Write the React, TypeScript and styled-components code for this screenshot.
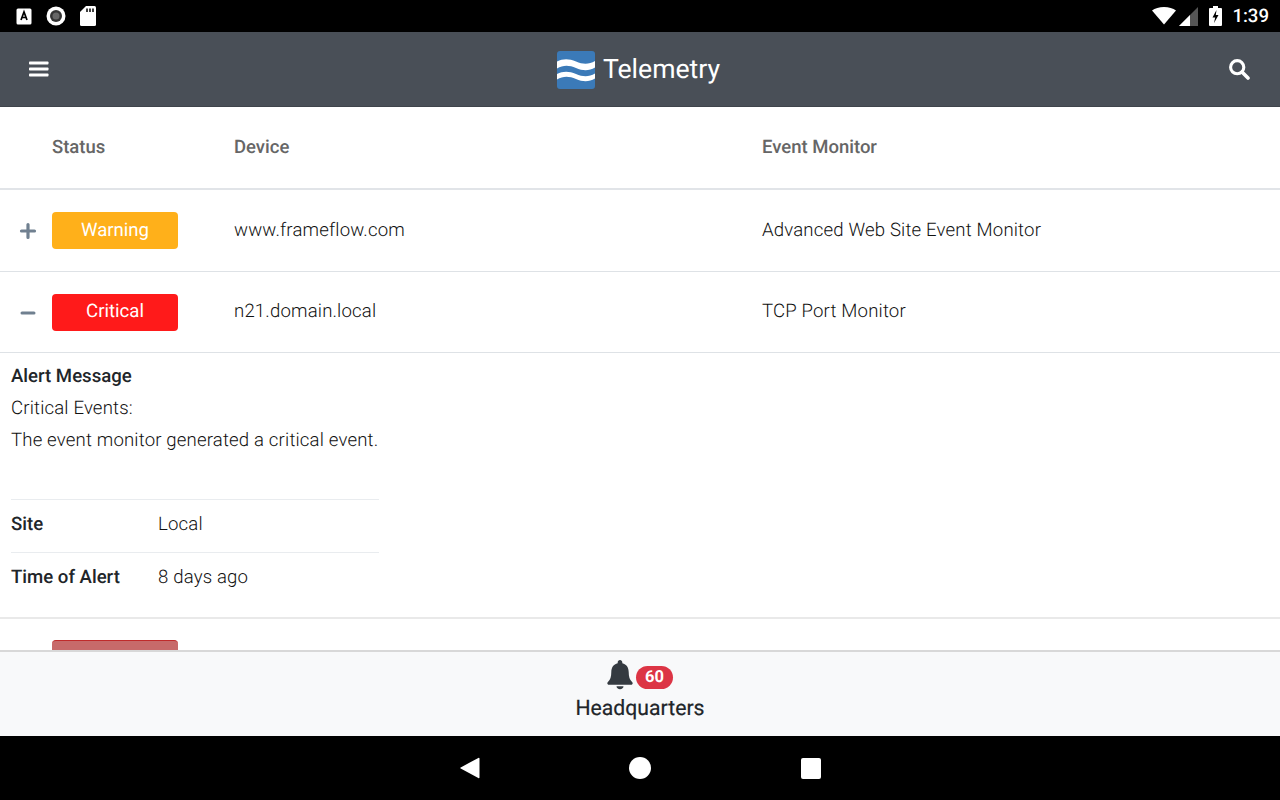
import React from "react";
import styled, { createGlobalStyle } from "styled-components";

const GlobalStyle = createGlobalStyle`
  html, body { margin: 0; padding: 0; height: 100%; background: #000; }
  body { font-family: Roboto, "Liberation Sans", sans-serif; color: #212529; text-rendering: geometricPrecision; }
  * { box-sizing: border-box; }
`;

const Screen = styled.div`
  width: 1280px;
  height: 800px;
  display: flex;
  flex-direction: column;
  overflow: hidden;
  background: #fff;
`;

const StatusBar = styled.div`
  height: 32px;
  flex: none;
  background: #000;
  display: flex;
  align-items: center;
  justify-content: space-between;
  padding: 0 11px 0 16px;
`;

const StatusGroup = styled.div<{ $gap: number }>`
  display: flex;
  align-items: center;
  gap: ${(p) => p.$gap}px;
`;

const Clock = styled.span`
  color: #fff;
  font-size: 18.6px;
  font-weight: 500;
  margin-left: 1px;
`;

const Header = styled.header`
  height: 75px;
  flex: none;
  background: #494f57;
  border-bottom: 1px solid #3f444b;
  display: flex;
  align-items: center;
  justify-content: space-between;
  padding: 0 30px 0 29px;
`;

const Brand = styled.div`
  display: flex;
  align-items: center;
  gap: 8px;
  color: #fff;
  font-size: 26.6px;
  padding-top: 2px;
`;

const BrandName = styled.span`
  padding-bottom: 2px;
`;

const Content = styled.main`
  flex: 1;
  min-height: 0;
  overflow: hidden;
`;

const GridRow = styled.div`
  display: grid;
  grid-template-columns: 52px 182px 528px 1fr;
  align-items: center;
`;

const HeadRow = styled(GridRow)`
  height: 83px;
  border-bottom: 2px solid #e1e4e8;
  color: #666;
  font-size: 18.5px;
  font-weight: 500;
  padding-bottom: 2px;
`;

const DataRow = styled(GridRow)<{ $height: number }>`
  height: ${(p) => p.$height}px;
  border-bottom: 1px solid #dee2e6;
  font-size: 18.6px;
  font-weight: 300;
  letter-spacing: 0.16px;
  color: #111;
  padding-bottom: 2px;
`;

const Expander = styled.div`
  display: flex;
  justify-content: center;
  padding: 3px 0 0 3px;
`;

const Badge = styled.div<{ $color: string }>`
  width: 126px;
  height: 37px;
  margin-top: 2px;
  border-radius: 4px;
  background: ${(p) => p.$color};
  color: #fff;
  font-size: 18.6px;
  font-weight: 400;
  letter-spacing: 0;
  display: flex;
  align-items: center;
  justify-content: center;
  padding-bottom: 2px;
`;

const Details = styled.section`
  height: 266px;
  border-bottom: 2px solid #e9e9e9;
  padding: 7px 0 0 11px;
  font-size: 18.6px;
  font-weight: 300;
  letter-spacing: 0.16px;
  color: #111;
`;

const Line = styled.div<{ $bold?: boolean }>`
  height: 32px;
  line-height: 32px;
  font-weight: ${(p) => (p.$bold ? 500 : 300)};
  letter-spacing: ${(p) => (p.$bold ? "0" : "0.16px")};
  color: ${(p) => (p.$bold ? "#212529" : "#111")};
`;

const InfoTable = styled.div`
  width: 368px;
  margin-top: 43px;
`;

const InfoRow = styled.div`
  display: grid;
  grid-template-columns: 147px 1fr;
  height: 53px;
  padding-bottom: 4px;
  align-items: center;
  border-top: 1px solid #e9ecef;
`;

const InfoLabel = styled.span`
  font-weight: 500;
  letter-spacing: 0;
  color: #212529;
`;

const PartialRow = styled.div`
  padding: 21px 0 0 52px;
`;

const PartialBadge = styled.div`
  width: 126px;
  height: 37px;
  border-radius: 4px;
  background: #c76a6a;
  border-top: 1px solid #bf2b2b;
`;

const Footer = styled.footer`
  height: 86px;
  flex: none;
  background: #f8f9fa;
  border-top: 2px solid #d8d8d8;
  display: flex;
  flex-direction: column;
  align-items: center;
  padding-top: 7px;
`;

const BellRow = styled.div`
  display: flex;
  align-items: center;
  gap: 3px;
  height: 32px;
`;

const Count = styled.span`
  min-width: 37px;
  height: 23px;
  border-radius: 12px;
  background: #dc3545;
  color: #fff;
  font-size: 16.5px;
  font-weight: 700;
  display: flex;
  align-items: center;
  justify-content: center;
  margin-top: 4px;
`;

const Place = styled.div`
  font-size: 21.2px;
  font-weight: 400;
  color: #212529;
  margin-top: 5px;
  -webkit-text-stroke: 0.2px #212529;
`;

const NavBar = styled.nav`
  height: 64px;
  flex: none;
  background: #000;
  display: flex;
  align-items: center;
  justify-content: center;
  gap: 149px;
  padding-left: 1px;
`;

function Menu() {
  return (
    <svg width="20" height="16" viewBox="0 0 20 16">
      <g fill="#fff">
        <rect x="0" y="0.5" width="19.5" height="3" rx="0.8" />
        <rect x="0" y="6.5" width="19.5" height="3" rx="0.8" />
        <rect x="0" y="12.5" width="19.5" height="3" rx="0.8" />
      </g>
    </svg>
  );
}

function Search() {
  return (
    <svg width="22" height="22" viewBox="0 0 22 22" fill="none">
      <circle cx="9.2" cy="9.2" r="6.6" stroke="#fff" strokeWidth="3.1" />
      <path d="M14 14l6 6" stroke="#fff" strokeWidth="3.6" strokeLinecap="round" />
    </svg>
  );
}

function Logo() {
  return (
    <svg width="38" height="38" viewBox="0 0 38 38">
      <rect width="38" height="38" rx="3" fill="#3b7ab8" />
      <path d="M0 10.500c6-3 12-3 19 0s13 3 19-.5v6.500c-6 3.500-12 3.500-19 .5s-13-3-19 .5z" fill="#fff" />
      <path d="M0 23c6-3 12-3 19 0s13 3 19-.5v5c-6 3.500-12 3.500-19 .5s-13-3-19 .5z" fill="#fff" />
    </svg>
  );
}

function Plus() {
  return (
    <svg width="18" height="18" viewBox="0 0 18 18">
      <path d="M9 2.500v13M2.500 9h13" stroke="#708090" strokeWidth="3.200" strokeLinecap="round" />
    </svg>
  );
}

function Minus() {
  return (
    <svg width="18" height="18" viewBox="0 0 18 18">
      <path d="M3 9h12" stroke="#708090" strokeWidth="3" strokeLinecap="round" />
    </svg>
  );
}

function Bell() {
  return (
    <svg width="26" height="30" viewBox="0 0 26 30">
      <path
        fill="#343a40"
        d="M13 0c-1.300 0-2.300 1-2.300 2.300v.9C6.500 4.200 4.300 7.500 4.300 12c0 5-1 7.600-3.200 9.700-.5.5-.8 1-.8 1.600 0 .9.700 1.500 1.600 1.500h22.200c.9 0 1.600-.6 1.600-1.500 0-.6-.3-1.100-.8-1.600-2.200-2.100-3.200-4.700-3.200-9.700 0-4.500-2.200-7.800-6.400-8.800v-.9C15.300 1 14.300 0 13 0z"
      />
      <path fill="#343a40" d="M9.500 26.300h7c0 1.600-1.500 2.900-3.500 2.900s-3.500-1.300-3.500-2.900z" />
    </svg>
  );
}

export default function App() {
  return (
    <>
      <GlobalStyle />
      <Screen>
        <StatusBar>
          <StatusGroup $gap={14}>
            <svg width="16" height="17" viewBox="0 0 16 17">
              <rect x="0.500" y="0.500" width="15" height="16" rx="1.500" fill="#fff" />
              <path d="M5 12l3-8 3 8M6.200 9.500h3.600" fill="none" stroke="#000" strokeWidth="1.700" />
            </svg>
            <svg width="20" height="20" viewBox="0 0 20 20">
              <circle cx="10" cy="10" r="9.500" fill="#fff" />
              <circle cx="10" cy="10" r="6" fill="#333" />
              <circle cx="10" cy="10" r="3.500" fill="#666" />
            </svg>
            <svg width="16" height="20" viewBox="0 0 16 20">
              <path d="M6 0h8.500A1.500 1.500 0 0 1 16 1.500v17a1.500 1.500 0 0 1-1.500 1.500h-13A1.500 1.500 0 0 1 0 18.500V6z" fill="#fff" />
              <path d="M7 2.500v3.500M10 2.500v3.500M13 2.500v3.500" stroke="#000" strokeWidth="1.500" />
            </svg>
          </StatusGroup>
          <StatusGroup $gap={9}>
            <svg width="24" height="18" viewBox="0 0 24 18">
              <path d="M12 17.500L0 3.500C3 1.200 7.200 0 12 0s9 1.200 12 3.500z" fill="#fff" />
            </svg>
            <svg width="19" height="19" viewBox="0 0 19 19" style={{ marginLeft: -6 }}>
              <path d="M19 0v19H0z" fill="#555" />
              <path d="M11 8v11H0z" fill="#fff" />
            </svg>
            <svg width="13" height="20" viewBox="0 0 13 20" style={{ marginLeft: 2 }}>
              <path d="M4 0h5v2h3a1 1 0 0 1 1 1v16a1 1 0 0 1-1 1H1a1 1 0 0 1-1-1V3a1 1 0 0 1 1-1h3z" fill="#fff" />
              <path d="M7.500 4L3.500 11.500h2.700L5 17l4.500-8H6.800z" fill="#000" />
            </svg>
            <Clock>1:39</Clock>
          </StatusGroup>
        </StatusBar>

        <Header>
          <Menu />
          <Brand>
            <Logo />
            <BrandName>Telemetry</BrandName>
          </Brand>
          <Search />
        </Header>

        <Content>
          <HeadRow>
            <span />
            <span>Status</span>
            <span>Device</span>
            <span>Event Monitor</span>
          </HeadRow>
          <DataRow $height={82}>
            <Expander>
              <Plus />
            </Expander>
            <Badge $color="#ffb01a">Warning</Badge>
            <span>www.frameflow.com</span>
            <span>Advanced Web Site Event Monitor</span>
          </DataRow>
          <DataRow $height={81}>
            <Expander>
              <Minus />
            </Expander>
            <Badge $color="#ff1a1a">Critical</Badge>
            <span>n21.domain.local</span>
            <span>TCP Port Monitor</span>
          </DataRow>
          <Details>
            <Line $bold>Alert Message</Line>
            <Line>Critical Events:</Line>
            <Line>The event monitor generated a critical event.</Line>
            <InfoTable>
              <InfoRow>
                <InfoLabel>Site</InfoLabel>
                <span>Local</span>
              </InfoRow>
              <InfoRow>
                <InfoLabel>Time of Alert</InfoLabel>
                <span>8 days ago</span>
              </InfoRow>
            </InfoTable>
          </Details>
          <PartialRow>
            <PartialBadge />
          </PartialRow>
        </Content>

        <Footer>
          <BellRow>
            <Bell />
            <Count>60</Count>
          </BellRow>
          <Place>Headquarters</Place>
        </Footer>

        <NavBar>
          <svg width="20" height="22" viewBox="0 0 20 22">
            <path d="M19.500 1.500v19a.8.8 0 0 1-1.200.6L.7 11.600a.7.7 0 0 1 0-1.200L18.300.9a.8.8 0 0 1 1.200.6z" fill="#fff" />
          </svg>
          <svg width="22" height="22" viewBox="0 0 22 22">
            <circle cx="11" cy="11" r="11" fill="#fff" />
          </svg>
          <svg width="20" height="21" viewBox="0 0 20 21" style={{ marginLeft: 1 }}>
            <rect width="20" height="21" rx="2" fill="#fff" />
          </svg>
        </NavBar>
      </Screen>
    </>
  );
}
